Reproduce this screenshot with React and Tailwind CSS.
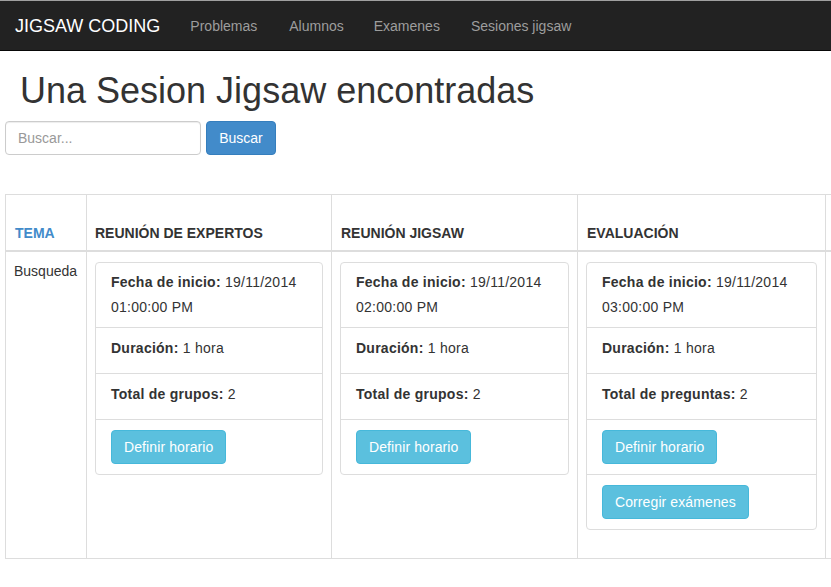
import React from "react";

function Item({ first, children }) {
  return (
    <div
      className={
        first
          ? "h-[64px] px-[15px] pt-[7px] leading-[25px] tracking-[0.25px]"
          : "h-[46px] border-t border-[#ddd] px-[15px] pt-[8px] leading-[25px] tracking-[0.25px]"
      }
    >
      {children}
    </div>
  );
}

function BtnRow({ children }) {
  return (
    <div className="h-[55px] border-t border-[#ddd] px-[15px] pt-[10px]">
      <button className="h-[34px] rounded-[4px] border border-[#46b8da] bg-[#5bc0de] px-[12px] text-[14px] leading-[20px] tracking-[0.1px] text-white">
        {children}
      </button>
    </div>
  );
}

function Card({ time, totalLabel, extra }) {
  return (
    <div className="w-full rounded-[4px] border border-[#ddd] bg-white">
      <Item first>
        <b>Fecha de inicio:</b> 19/11/2014 {time}
      </Item>
      <Item>
        <b>Duración:</b> 1 hora
      </Item>
      <Item>
        <b>{totalLabel}:</b> 2
      </Item>
      <BtnRow>Definir horario</BtnRow>
      {extra && <BtnRow>Corregir exámenes</BtnRow>}
    </div>
  );
}

export default function App() {
  return (
    <div
      className="min-h-[587px] w-[831px] overflow-hidden bg-white text-[14px] leading-[20px] text-[#333]"
      style={{ fontFamily: '"Liberation Sans", Arial, sans-serif' }}
    >
      <nav className="flex h-[51px] items-center border-t border-b border-t-[#a0a0a0] border-b-[#080808] bg-[#222]">
        <span className="pl-[15px] pr-[15px] text-[18px] leading-[20px] text-white">
          JIGSAW CODING
        </span>
        <a className="px-[15px] text-[#9d9d9d]">Problemas</a>
        <a className="ml-[2px] px-[15px] text-[#9d9d9d]">Alumnos</a>
        <a className="px-[15px] text-[#9d9d9d]">Examenes</a>
        <a className="ml-[1px] px-[15px] text-[#9d9d9d]">Sesiones jigsaw</a>
      </nav>

      <h1 className="mt-[20px] pl-[20px] text-[36px] leading-[39.6px] font-normal">
        Una Sesion Jigsaw encontradas
      </h1>

      <div className="mt-[10px] flex gap-[5px] pl-[5px]">
        <input
          placeholder="Buscar..."
          className="h-[34px] w-[196px] rounded-[4px] border border-[#ccc] px-[12px] text-[14px] text-[#555] outline-none placeholder:text-[#999] shadow-[inset_0_1px_1px_rgba(0,0,0,0.075)]"
        />
        <button className="h-[34px] w-[70px] rounded-[4px] border border-[#357ebd] bg-[#428bca] text-[14px] text-white">
          Buscar
        </button>
      </div>

      <div className="mt-[39px] ml-[5px] w-[1100px] border-t border-[#ddd]">
        <div className="flex h-[57px] border-b-2 border-[#ddd] font-bold">
          <div className="flex w-[81px] items-end border-l border-[#ddd] pb-[7px] pl-[9px] text-[#428bca]">
            TEMA
          </div>
          <div className="flex w-[245px] items-end border-l border-[#ddd] pb-[7px] pl-[8px]">
            REUNIÓN DE EXPERTOS
          </div>
          <div className="flex w-[246px] items-end border-l border-[#ddd] pb-[7px] pl-[9px]">
            REUNIÓN JIGSAW
          </div>
          <div className="flex w-[248px] items-end border-l border-[#ddd] pb-[7px] pl-[9px]">
            EVALUACIÓN
          </div>
          <div className="flex flex-1 items-end border-l border-[#ddd] pb-[7px] pl-[9px]"></div>
        </div>
        <div className="flex h-[307px] border-b border-[#ddd]">
          <div className="w-[81px] border-l border-[#ddd] pt-[9px] pl-[8px]">Busqueda</div>
          <div className="w-[245px] border-l border-[#ddd] pt-[10px] pl-[8px] pr-[8px]">
            <Card time="01:00:00 PM" totalLabel="Total de grupos" />
          </div>
          <div className="w-[246px] border-l border-[#ddd] pt-[10px] pl-[8px] pr-[8px]">
            <Card time="02:00:00 PM" totalLabel="Total de grupos" />
          </div>
          <div className="w-[248px] border-l border-[#ddd] pt-[10px] pl-[8px] pr-[8px]">
            <Card time="03:00:00 PM" totalLabel="Total de preguntas" extra />
          </div>
          <div className="flex-1 border-l border-[#ddd]"></div>
        </div>
      </div>
    </div>
  );
}
